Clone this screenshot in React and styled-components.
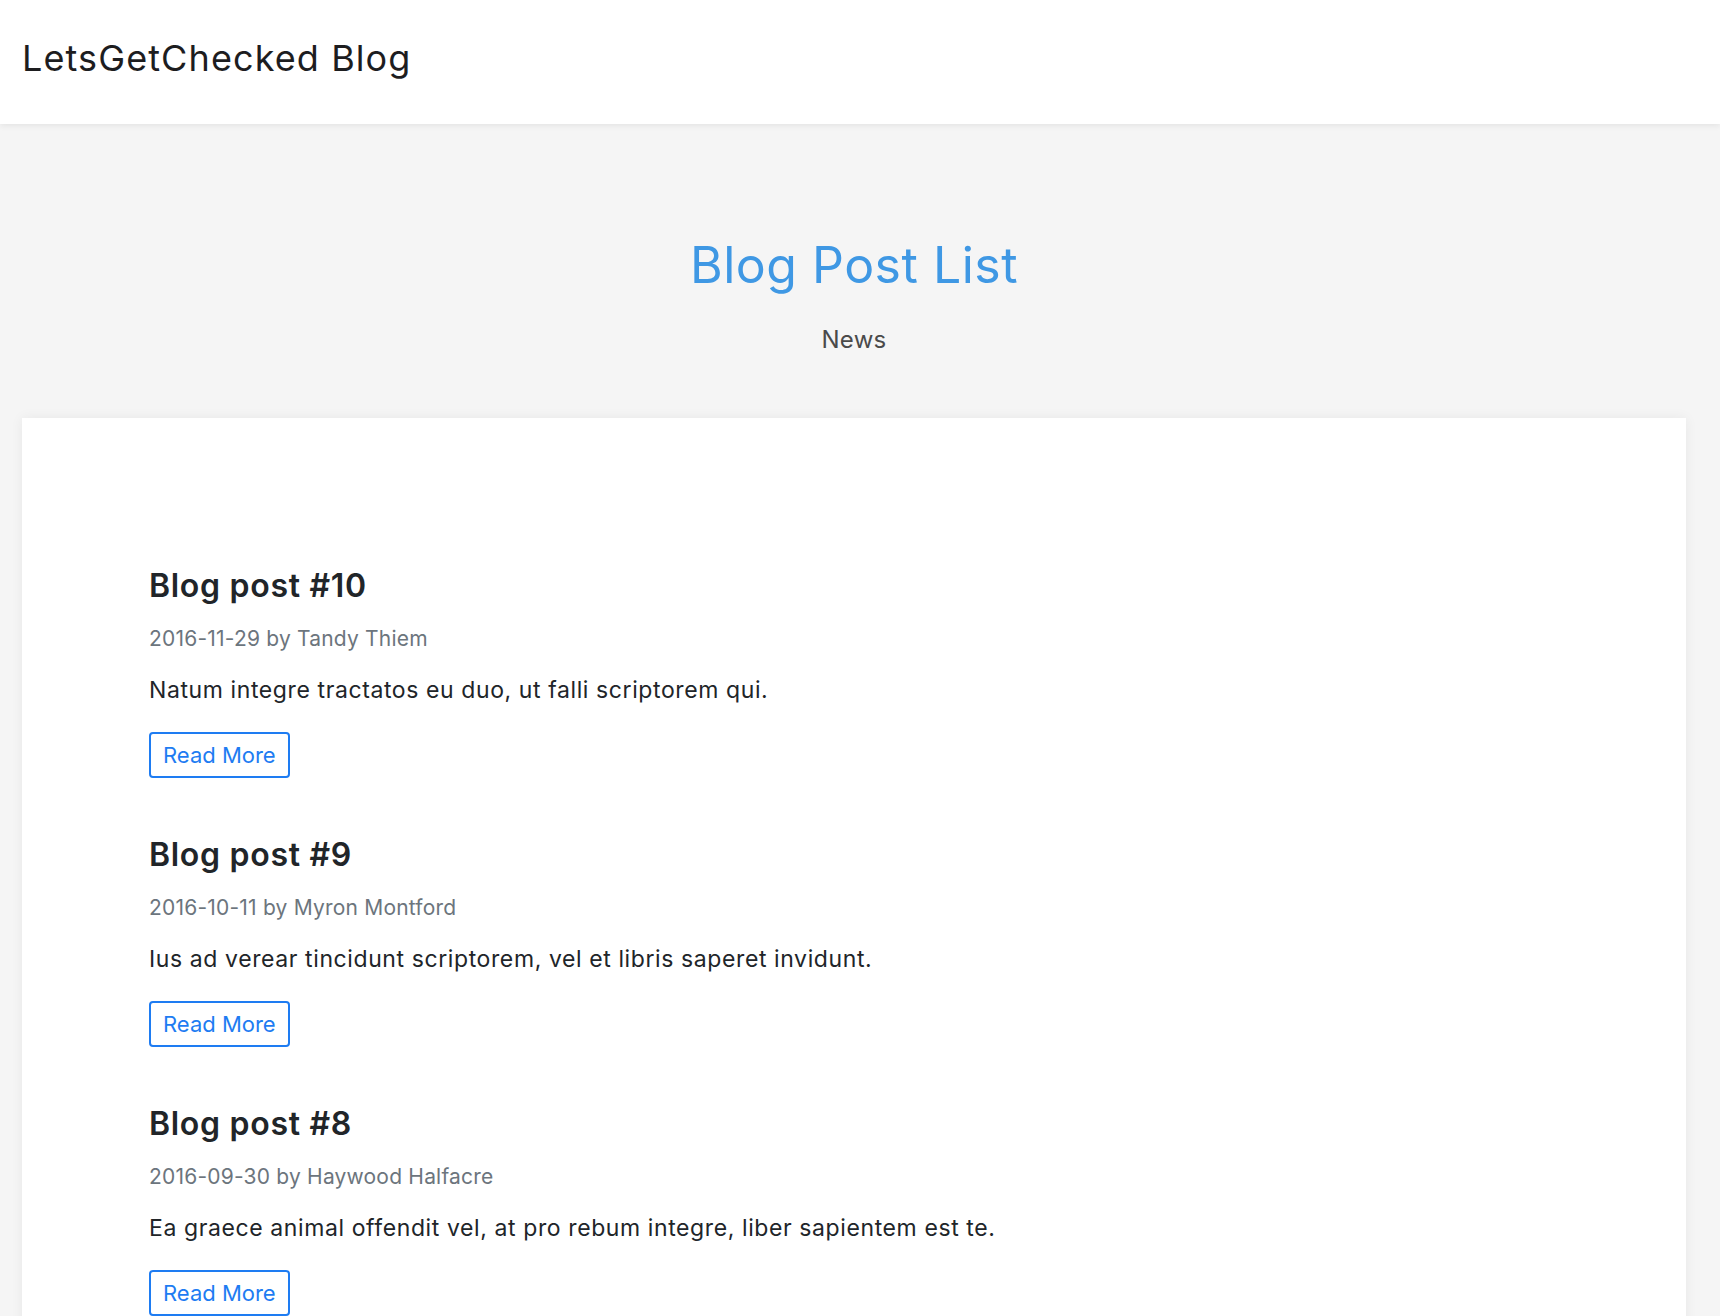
import React from 'react';
import styled, { createGlobalStyle } from 'styled-components';

const posts = [
  {
    id: 10,
    title: 'Blog post #10',
    date: '2016-11-29',
    author: 'Tandy Thiem',
    excerpt: 'Natum integre tractatos eu duo, ut falli scriptorem qui.',
  },
  {
    id: 9,
    title: 'Blog post #9',
    date: '2016-10-11',
    author: 'Myron Montford',
    excerpt: 'Ius ad verear tincidunt scriptorem, vel et libris saperet invidunt.',
  },
  {
    id: 8,
    title: 'Blog post #8',
    date: '2016-09-30',
    author: 'Haywood Halfacre',
    excerpt: 'Ea graece animal offendit vel, at pro rebum integre, liber sapientem est te.',
  },
];

function App() {
  return (
    <>
      <GlobalStyle />
      <Header>
        <Brand>LetsGetChecked Blog</Brand>
      </Header>

      <Main>
        <Hero>
          <PageTitle>Blog Post List</PageTitle>
          <Category>News</Category>
        </Hero>

        <Card>
          {posts.map((post) => (
            <Post key={post.id}>
              <PostTitle>{post.title}</PostTitle>
              <PostMeta>
                {post.date} by {post.author}
              </PostMeta>
              <PostExcerpt>{post.excerpt}</PostExcerpt>
              <ReadMore type="button">Read More</ReadMore>
            </Post>
          ))}
        </Card>
      </Main>
    </>
  );
}

const GlobalStyle = createGlobalStyle`
  * {
    box-sizing: border-box;
  }

  body {
    margin: 0;
    background-color: #f5f5f5;
    font-family: Inter, "Noto Sans", sans-serif;
    color: #212529;
  }
`;

const Header = styled.header`
  height: 124px;
  display: flex;
  align-items: center;
  padding: 0 22px 7px;
  background-color: #ffffff;
  box-shadow: 0 2px 6px rgba(0, 0, 0, 0.07);
  position: relative;
`;

const Brand = styled.h1`
  margin: 0;
  font-size: 36px;
  font-weight: 400;
  letter-spacing: 1.1px;
  color: #1d1d1f;
  line-height: 1.2;
`;

const Main = styled.main`
  padding: 0 34px 0 22px;
`;

const Hero = styled.section`
  display: flex;
  flex-direction: column;
  align-items: center;
  gap: 27px;
  padding: 111px 0 60px;
`;

const PageTitle = styled.h2`
  margin: 0;
  font-size: 50px;
  font-weight: 400;
  letter-spacing: 0.5px;
  line-height: 1.2;
  color: #3f98e4;
`;

const Category = styled.div`
  font-size: 24px;
  letter-spacing: 0.3px;
  line-height: 1.5;
  color: #4a4a4a;
`;

const Card = styled.section`
  background-color: #ffffff;
  box-shadow: 0 0 12px rgba(0, 0, 0, 0.06);
  padding: 149px 127px 80px;
  display: flex;
  flex-direction: column;
  gap: 58px;
`;

const Post = styled.article`
  display: flex;
  flex-direction: column;
  align-items: flex-start;
`;

const PostTitle = styled.h3`
  margin: 0 0 17px;
  font-size: 32px;
  font-weight: 600;
  letter-spacing: 0.7px;
  line-height: 38px;
  color: #212529;
`;

const PostMeta = styled.div`
  margin-bottom: 19px;
  font-size: 21px;
  letter-spacing: 0.2px;
  line-height: 33px;
  color: #6c757d;
`;

const PostExcerpt = styled.p`
  margin: 0 0 25px;
  font-size: 23px;
  letter-spacing: 0.6px;
  line-height: 33px;
  color: #212529;
`;

const ReadMore = styled.button`
  height: 46px;
  padding: 0 12px;
  background: transparent;
  border: 2px solid #1e7cf2;
  border-radius: 4px;
  color: #1e7cf2;
  font-family: inherit;
  font-size: 22px;
  cursor: pointer;
`;

export default App;
